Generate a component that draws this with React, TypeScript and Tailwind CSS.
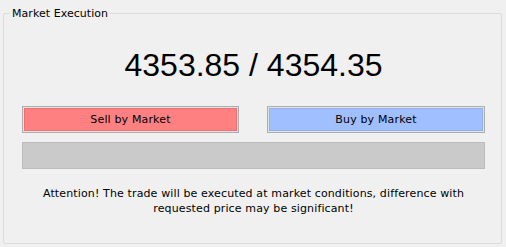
import React from "react";

export default function App() {
  return (
    <div className="w-[506px] h-[247px] bg-[#f0f0f0] pt-[13px] pl-[3px] [font-family:'DejaVu_Sans',Tahoma,sans-serif] text-black">
      <div className="relative w-[499px] h-[231px] border border-[#dcdcdc] rounded-[2px] pl-[18px] pr-[16px]">
        <span className="absolute -top-[7px] left-[6px] px-[2px] bg-[#f0f0f0] text-[11px] leading-[14px] tracking-[0.05px]">
          Market Execution
        </span>
        <div className="flex flex-col">
          <div className="mt-[35px] h-[32px] text-center text-[32px] leading-[32px] [font-family:'Liberation_Sans',Arial,sans-serif]">
            4353.85 / 4354.35
          </div>
          <div className="flex justify-between mt-[25px]">
            <div className="w-[217px] h-[27px] border border-[#adadad] p-[1px] bg-[#e3e3e3]">
              <div className="h-full bg-[#ff8080] border border-[#f07070] flex items-center justify-center pt-[1px] text-[11px] tracking-[0.15px]">
                Sell by Market
              </div>
            </div>
            <div className="w-[218px] h-[27px] border border-[#adadad] p-[1px] bg-[#e3e3e3]">
              <div className="h-full bg-[#a0bfff] border border-[#90b0f0] flex items-center justify-center pt-[1px] text-[11px] tracking-[0.15px]">
                Buy by Market
              </div>
            </div>
          </div>
          <div className="mt-[9px] h-[27px] bg-[#cacaca] border border-[#bcbcbc]" />
          <div className="mt-[17px] text-center text-[11px] leading-[15px] tracking-[0.13px]">
            Attention! The trade will be executed at market conditions, difference with
            <br />
            requested price may be significant!
          </div>
        </div>
      </div>
    </div>
  );
}
